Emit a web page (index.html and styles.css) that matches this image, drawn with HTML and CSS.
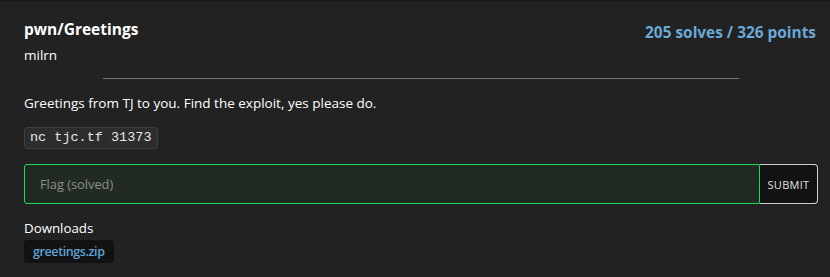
FILE: index.html
```html
<!DOCTYPE html>
<html>
<head>
<meta charset="utf-8">
<link rel="stylesheet" href="styles.css">
</head>
<body>
<div class="topbar"></div>
<div class="card">
  <div class="head">
    <div class="titles">
      <div class="title">pwn/Greetings</div>
      <div class="author">milrn</div>
    </div>
    <div class="stats">205 solves / 326 points</div>
  </div>
  <hr class="rule">
  <p class="desc">Greetings from TJ to you. Find the exploit, yes please do.</p>
  <code class="cmd">nc tjc.tf 31373</code>
  <form class="flagform">
    <input class="flag" type="text" placeholder="Flag (solved)">
    <button class="submit" type="button">SUBMIT</button>
  </form>
  <div class="dl-label">Downloads</div>
  <a class="dl" href="#">greetings.zip</a>
</div>
</body>
</html>
```

FILE: styles.css
```css
* { box-sizing: border-box; }
html, body {
  margin: 0;
  padding: 0;
  background: #222222;
  font-family: "Open Sans", "Noto Sans", sans-serif;
  color: #ffffff;
}
.topbar {
  height: 2px;
  background: #1a1a1a;
}
.card {
  padding: 14px 12px 0 24px;
  display: flex;
  flex-direction: column;
  align-items: flex-start;
}
.head {
  width: 100%;
  display: flex;
  justify-content: space-between;
  align-items: flex-start;
}
.title {
  font-size: 15.5px;
  font-weight: 700;
  line-height: 22px;
  margin-top: 2px;
}
.author {
  font-size: 13.5px;
  line-height: 20px;
  margin-top: 5px;
}
.stats {
  font-size: 15.4px;
  font-weight: 700;
  color: #6aa8d6;
  line-height: 22px;
  margin-top: 6px;
  margin-right: 2px;
}
.rule {
  align-self: center;
  width: 80%;
  border: 0;
  border-top: 1px solid #777777;
  margin: 13px 0 0 0;
}
.desc {
  font-size: 13.5px;
  line-height: 20px;
  margin: 14px 0 0 0;
}
.cmd {
  margin-top: 14px;
  display: inline-block;
  font-family: "Liberation Mono", "DejaVu Sans Mono", monospace;
  font-size: 13.5px;
  line-height: 20px;
  padding: 0 5px;
  background: #2d2d2d;
  border: 1px solid #3e3e3e;
  border-radius: 3px;
  color: #e6e6e6;
}
.flagform {
  width: 100%;
  display: flex;
  margin-top: 15px;
  height: 40px;
}
.flag {
  flex: 1;
  height: 100%;
  background: #222b22;
  border: 1px solid #22d45a;
  border-radius: 3px 0 0 3px;
  padding: 0 15px;
  font-family: inherit;
  font-size: 12.8px;
  color: #dddddd;
  outline: none;
}
.flag::placeholder { color: #8a8f8a; }
.submit {
  width: 58px;
  height: 100%;
  background: #121212;
  border: 1px solid #cfcfcf;
  border-left: 0;
  border-radius: 0 4px 4px 0;
  color: #e0e0e0;
  font-family: inherit;
  font-size: 11px;
  letter-spacing: 0.3px;
  padding: 0;
}
.dl-label {
  margin-top: 14px;
  font-size: 13.3px;
  line-height: 20px;
}
.dl {
  margin-top: 2px;
  display: inline-block;
  background: #121212;
  border-radius: 4px;
  padding: 0 9px;
  height: 23px;
  line-height: 23px;
  font-size: 12.5px;
  font-weight: 600;
  letter-spacing: -0.4px;
  color: #5ea3d8;
  text-decoration: none;
}
```
